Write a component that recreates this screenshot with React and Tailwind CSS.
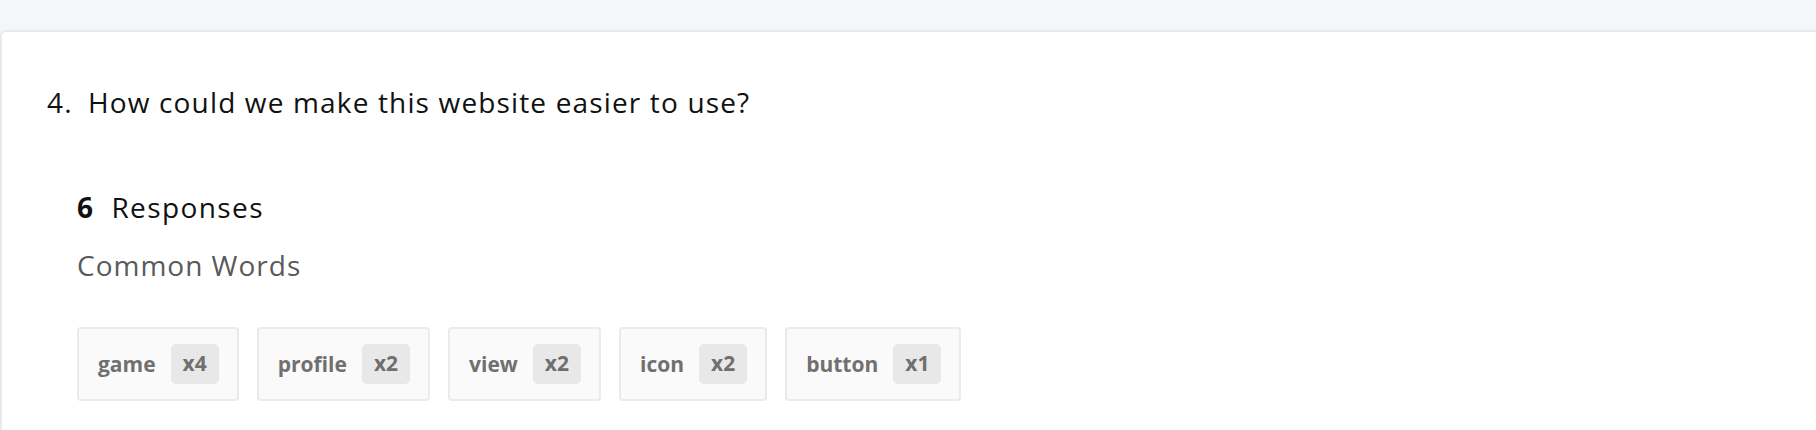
import React from 'react';

const words = [
  { word: 'game', count: 4 },
  { word: 'profile', count: 2 },
  { word: 'view', count: 2 },
  { word: 'icon', count: 2 },
  { word: 'button', count: 1 },
];

const WordChip = ({ word, count }) => (
  <div className="flex items-center h-[74px] pl-[19px] pr-[18px] bg-[#fafafa] border-2 border-[#ebebeb] rounded-[4px]">
    <span className="text-[21px] leading-[24px] font-bold text-[#707070]">{word}</span>
    <span className="ml-[15px] flex items-center justify-center h-[40px] px-[12px] pb-[3px] bg-[#e8e8e8] rounded-[5px] text-[21px] leading-[24px] font-bold text-[#6f6f6f]">
      x{count}
    </span>
  </div>
);

const App = () => {
  return (
    <div
      className="min-h-screen bg-[#f5f6f8] pt-[30px] overflow-hidden"
      style={{ fontFamily: '"Open Sans", "Noto Sans", sans-serif' }}
    >
      <div className="bg-white border-t-2 border-l-2 border-[#e9e9e9] rounded-tl-[6px] min-h-[400px] pt-[54px] pl-[45px]">
        {/* Pregunta */}
        <h2 className="flex text-[28px] leading-[32px] tracking-[1.15px] font-normal text-[#111]">
          <span className="w-[41px]">4.</span>
          <span>How could we make this website easier to use?</span>
        </h2>

        {/* Resumen */}
        <div className="pl-[30px] mt-[74px]">
          <div className="text-[28px] leading-[30px] tracking-[1.4px] text-[#111]">
            <span className="font-bold mr-[17px]">6</span>
            Responses
          </div>
          <div className="mt-[27px] text-[28px] leading-[32px] tracking-[1px] text-[#5a5a5a]">
            Common Words
          </div>

          <div className="mt-[46px] flex gap-[18px]">
            {words.map((w) => (
              <WordChip key={w.word} word={w.word} count={w.count} />
            ))}
          </div>
        </div>
      </div>
    </div>
  );
};

export default App;
